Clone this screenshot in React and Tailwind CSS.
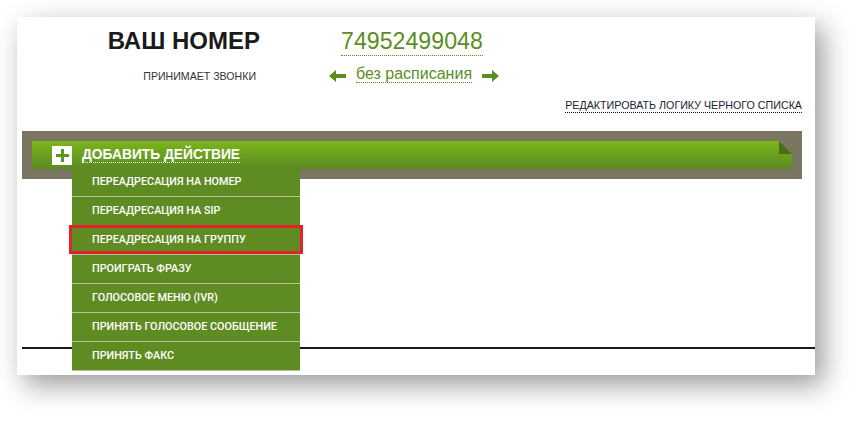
import React from "react";

const menuItems = [
  "ПЕРЕАДРЕСАЦИЯ НА НОМЕР",
  "ПЕРЕАДРЕСАЦИЯ НА SIP",
  "ПЕРЕАДРЕСАЦИЯ НА ГРУППУ",
  "ПРОИГРАТЬ ФРАЗУ",
  "ГОЛОСОВОЕ МЕНЮ (IVR)",
  "ПРИНЯТЬ ГОЛОСОВОЕ СООБЩЕНИЕ",
  "ПРИНЯТЬ ФАКС",
];

const Arrow = ({ dir }) => (
  <svg
    width="17"
    height="12"
    viewBox="0 0 17 12"
    className={dir === "right" ? "mt-[3px] rotate-180" : "mt-[3px]"}
  >
    <polygon points="0,6 7,0 7,4 17,4 17,8 7,8 7,12" fill="#5c8d1f" />
  </svg>
);

const App = () => {
  return (
    <div
      className="w-[863px] h-[423px] bg-white overflow-hidden pt-[17px] pl-[17px]"
      style={{ fontFamily: '"Liberation Sans", Arial, sans-serif' }}
    >
      <div className="w-[798px] bg-white pl-[5px] pt-[12px] pb-[26px] shadow-[8px_10px_26px_rgba(0,0,0,0.4)]">
        <div className="pr-[13px]">
          {/* header */}
          <div className="flex items-start">
            <div className="w-[238px] text-right">
              <div className="text-[24px] leading-[24px] font-bold text-[#1a1a1a]">
                ВАШ НОМЕР
              </div>
              <div className="mt-[16px] pr-[4px] text-[10.6px] leading-[14px] text-[#333]">
                ПРИНИМАЕТ ЗВОНКИ
              </div>
            </div>
            <div className="ml-[69px]">
              <div className="pl-[12px]">
                <span className="inline-block text-[23.2px] leading-[24px] pb-[2px] text-[#5c8d1f] border-b border-dotted border-[#5c8d1f]">
                  74952499048
                </span>
              </div>
              <div className="mt-[10px] flex items-center gap-[10px]">
                <Arrow dir="left" />
                <span className="text-[16px] leading-[16px] text-[#5c8d1f] border-b border-dotted border-[#5c8d1f]">
                  без расписания
                </span>
                <Arrow dir="right" />
              </div>
            </div>
          </div>

          <div className="mt-[16px] flex justify-end">
            <span className="text-[10.7px] leading-[13px] text-[#222233] border-b border-dotted border-[#111]">
              РЕДАКТИРОВАТЬ ЛОГИКУ ЧЕРНОГО СПИСКА
            </span>
          </div>

          {/* action bar */}
          <div className="mt-[18px] bg-[#7b7661] p-[10px]">
            <div className="relative h-[28px] bg-gradient-to-b from-[#7cb518] to-[#5a8a22] flex items-center pl-[20px]">
              <div className="w-[20px] h-[19px] bg-white flex items-center justify-center">
                <svg width="13" height="13" viewBox="0 0 13 13">
                  <rect x="5" y="0" width="3" height="13" fill="#5c961d" />
                  <rect x="0" y="5" width="13" height="3" fill="#5c961d" />
                </svg>
              </div>
              <span className="ml-[10px] text-[13.8px] leading-[15px] font-bold text-white border-b border-dotted border-white">
                ДОБАВИТЬ ДЕЙСТВИЕ
              </span>
              <svg
                width="13"
                height="13"
                viewBox="0 0 13 13"
                className="absolute top-0 right-0"
              >
                <polygon points="0,0 13,0 13,13" fill="#7b7661" />
                <polygon points="0,0 0,13 13,13" fill="#4b6d17" />
              </svg>

              {/* dropdown */}
              <ul className="absolute left-[40px] top-[27px] w-[228px] bg-[#5f8b23] z-10">
                {menuItems.map((item, i) => (
                  <li
                    key={item}
                    className="relative h-[29px] flex items-center pl-[20px] border-b border-[#b9c294] text-white text-[10.8px] font-medium"
                    style={{ fontFamily: "Roboto, Arial, sans-serif" }}
                  >
                    {item}
                    {i === 2 && (
                      <span className="absolute -left-[3px] -right-[3px] -top-[1px] bottom-0 border-[3px] border-[#e5222b]" />
                    )}
                  </li>
                ))}
              </ul>
            </div>
          </div>
        </div>

        <div className="mt-[168px] h-[2px] bg-[#1a1a1a]" />
      </div>
    </div>
  );
};

export default App;
